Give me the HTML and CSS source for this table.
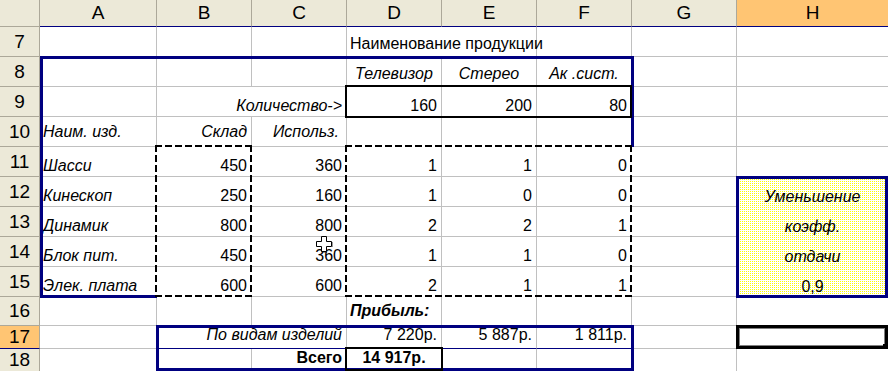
FILE: index.html
```html
<!DOCTYPE html>
<html lang="ru">
<head>
<meta charset="utf-8">
<title>Прибыль по видам изделий</title>
<link rel="stylesheet" href="styles.css">
</head>
<body>
<div class="sheet">
  <div class="line head">
    <div class="hd corner"></div>
    <div class="hd col">A</div>
    <div class="hd col">B</div>
    <div class="hd col">C</div>
    <div class="hd col">D</div>
    <div class="hd col">E</div>
    <div class="hd col">F</div>
    <div class="hd col">G</div>
    <div class="hd col sel last">H</div>
  </div>

  <div class="line r7">
    <div class="hd num">7</div>
    <div class="c"></div>
    <div class="c"></div>
    <div class="c"></div>
    <div class="c span2">Наименование продукции</div>
    <div class="c"></div>
    <div class="c"></div>
    <div class="c last nv-r"></div>
  </div>

  <div class="line r8">
    <div class="hd num">8</div>
    <div class="c"></div>
    <div class="c"></div>
    <div class="c"></div>
    <div class="c i ctr">Телевизор</div>
    <div class="c i ctr">Стерео</div>
    <div class="c i ctr">Ак .сист.</div>
    <div class="c"></div>
    <div class="c last nv-r"></div>
  </div>

  <div class="line r9">
    <div class="hd num">9</div>
    <div class="c"></div>
    <div class="c span2 i r">Количество-&gt;</div>
    <div class="c r">160</div>
    <div class="c r">200</div>
    <div class="c r">80</div>
    <div class="c"></div>
    <div class="c last nv-r"></div>
  </div>

  <div class="line r10">
    <div class="hd num">10</div>
    <div class="c i">Наим. изд.</div>
    <div class="c i r">Склад</div>
    <div class="c i r wide">Использ.</div>
    <div class="c"></div>
    <div class="c"></div>
    <div class="c"></div>
    <div class="c"></div>
    <div class="c last"></div>
  </div>

  <div class="line r11">
    <div class="hd num">11</div>
    <div class="c i">Шасси</div>
    <div class="c r">450</div>
    <div class="c r">360</div>
    <div class="c r">1</div>
    <div class="c r">1</div>
    <div class="c r">0</div>
    <div class="c"></div>
    <div class="c last"></div>
  </div>

  <div class="line r12">
    <div class="hd num">12</div>
    <div class="c i">Кинескоп</div>
    <div class="c r">250</div>
    <div class="c r">160</div>
    <div class="c r">1</div>
    <div class="c r">0</div>
    <div class="c r">0</div>
    <div class="c"></div>
    <div class="c last fill i ctr">Уменьшение</div>
  </div>

  <div class="line r13">
    <div class="hd num">13</div>
    <div class="c i">Динамик</div>
    <div class="c r">800</div>
    <div class="c r">800</div>
    <div class="c r">2</div>
    <div class="c r">2</div>
    <div class="c r">1</div>
    <div class="c"></div>
    <div class="c last fill i ctr">коэфф.</div>
  </div>

  <div class="line r14">
    <div class="hd num">14</div>
    <div class="c i">Блок пит.</div>
    <div class="c r">450</div>
    <div class="c r">360</div>
    <div class="c r">1</div>
    <div class="c r">1</div>
    <div class="c r">0</div>
    <div class="c"></div>
    <div class="c last fill i ctr">отдачи</div>
  </div>

  <div class="line r15">
    <div class="hd num">15</div>
    <div class="c i">Элек. плата</div>
    <div class="c r">600</div>
    <div class="c r">600</div>
    <div class="c r">2</div>
    <div class="c r">1</div>
    <div class="c r">1</div>
    <div class="c"></div>
    <div class="c last fill ctr">0,9</div>
  </div>

  <div class="line r16">
    <div class="hd num">16</div>
    <div class="c"></div>
    <div class="c"></div>
    <div class="c"></div>
    <div class="c b i">Прибыль:</div>
    <div class="c"></div>
    <div class="c"></div>
    <div class="c"></div>
    <div class="c last"></div>
  </div>

  <div class="line r17">
    <div class="hd num sel">17</div>
    <div class="c"></div>
    <div class="c span2 i r nb">По видам изделий</div>
    <div class="c r nb">7 220р.</div>
    <div class="c r nb">5 887р.</div>
    <div class="c r nb">1 811р.</div>
    <div class="c"></div>
    <div class="c last"></div>
  </div>

  <div class="line r18">
    <div class="hd num">18</div>
    <div class="c"></div>
    <div class="c"></div>
    <div class="c b r">Всего</div>
    <div class="c b ctr">14 917р.</div>
    <div class="c"></div>
    <div class="c"></div>
    <div class="c"></div>
    <div class="c last"></div>
  </div>

  <!-- range borders drawn over the cells -->
  <div class="frame nv-a"></div>
  <div class="frame nv-top"></div>
  <div class="frame nv-f"></div>
  <div class="frame box-qty"></div>
  <div class="frame dash dash-b"></div>
  <div class="frame dash dash-df"></div>
  <div class="frame nv-coef"></div>
  <div class="frame nv-sum"></div>
  <div class="frame box-total"></div>
  <div class="frame active"><span class="handle"></span></div>

  <svg class="cursor" width="17" height="17" viewBox="0 0 17 17">
    <path d="M5.5 0.5h5v5h5v5h-5v5h-5v-5h-5v-5h5z" fill="#fff" stroke="#000"/>
    <path d="M6 16.5h5M16.5 6v5" stroke="#000" stroke-opacity="0.4"/>
  </svg>
</div>
</body>
</html>
```

FILE: styles.css
```css
* {
  box-sizing: border-box;
}

html,
body {
  margin: 0;
  padding: 0;
  background: #fff;
}

body {
  overflow: hidden;
  font-family: "Liberation Sans", Arial, sans-serif;
  font-size: 16px;
  color: #000;
}

.sheet {
  position: relative;
  display: grid;
  grid-template-columns: 40px 117px 95px 95px 95px 95px 95px 105px 1fr;
  grid-template-rows: 27px repeat(9, 30px) 29px 23px 23px;
  width: 888px;
  height: 371px;
  overflow: hidden;
}

.line {
  display: contents;
}

/* headers */
.hd {
  display: flex;
  align-items: center;
  justify-content: center;
  background: #ece9d8;
  border-right: 1px solid #aca899;
  border-bottom: 1px solid #aca899;
  font-size: 19px;
}

.hd.col {
  border-bottom-color: #000080;
}

.hd.sel {
  background: #ffc573;
}

.hd.num.sel {
  border-bottom-color: #000080;
}

.hd.last {
  border-right: none;
}

/* cells */
.c {
  display: flex;
  align-items: flex-end;
  justify-content: flex-start;
  padding: 0 3px 1px 3px;
  line-height: 18px;
  white-space: nowrap;
  border-right: 1px solid #c0c0c0;
  border-bottom: 1px solid #c0c0c0;
}

.c.last {
  border-right: none;
}

.span2 {
  grid-column: span 2;
}

.i {
  font-style: italic;
}

.b {
  font-weight: bold;
}

.r {
  justify-content: flex-end;
  padding-right: 4px;
}

.ctr {
  justify-content: center;
}

.wide {
  padding-right: 7px;
}

.nb {
  border-bottom-color: #000080;
}

.nv-r {
  border-right: 2px solid #000080;
}

/* sparse yellow dot pattern fill */
.fill {
  border-bottom: none;
  background: conic-gradient(#ffff00 0 25%, #fff 0) 0 0 / 2px 2px;
}

/* vertical placement of text per row */
.r7 > .c { padding-bottom: 3px; }
.r8 > .c { padding-bottom: 3px; }
.r9 > .c { padding-bottom: 1px; }
.r10 > .c { padding-bottom: 5px; }
.r16 > .c { padding-bottom: 5px; }
.r17 > .c { padding-bottom: 4px; }
.r18 > .c { padding-bottom: 4px; }

/* range borders */
.frame {
  position: absolute;
  pointer-events: none;
}

.nv-a {
  grid-column: 2 / 3;
  grid-row: 3 / 11;
  inset: -1px 0 -1px 0;
  border-top: 3px solid #000080;
  border-left: 3px solid #000080;
  border-bottom: 3px solid #000080;
}

.nv-top {
  grid-column: 3 / 8;
  grid-row: 3 / 4;
  top: -1px;
  left: 0;
  right: -2px;
  height: 3px;
  background: #000080;
}

.nv-f {
  grid-column: 7 / 8;
  grid-row: 3 / 6;
  inset: -1px -2px 0 auto;
  width: 3px;
  background: #000080;
}

.box-qty {
  grid-column: 5 / 8;
  grid-row: 4 / 5;
  inset: -2px 0 -1px -2px;
  border: 2px solid #000;
}

.dash {
  --h: repeating-linear-gradient(90deg, #000 0 7px, #fff 7px 10px);
  --v: repeating-linear-gradient(180deg, #000 0 7px, #fff 7px 10px);
  background:
    var(--v) left top / 2px 100% no-repeat,
    var(--v) right top / 2px 100% no-repeat,
    var(--h) left top / 100% 2px no-repeat,
    var(--h) left bottom / 100% 2px no-repeat;
}

.dash-b {
  grid-column: 3 / 4;
  grid-row: 6 / 11;
  inset: -2px 0 0 -2px;
}

.dash-df {
  grid-column: 5 / 8;
  grid-row: 6 / 11;
  inset: -2px 0 0 -2px;
}

.nv-coef {
  grid-column: 9 / 10;
  grid-row: 7 / 11;
  inset: -1px 0 -1px -1px;
  border: 3px solid #000080;
}

.nv-sum {
  grid-column: 3 / 8;
  grid-row: 12 / 14;
  inset: -1px -2px 1px -1px;
  border: 3px solid #000080;
}

.box-total {
  grid-column: 5 / 6;
  grid-row: 13 / 14;
  inset: -2px -1px 1px -2px;
  border: 2px solid #000;
}

.active {
  grid-column: 9 / 10;
  grid-row: 12 / 13;
  inset: -1px 0 0 -1px;
  border: 3px solid #000;
  box-shadow: inset 0 0 0 1px #808080;
}

.handle {
  position: absolute;
  right: -3px;
  bottom: -3px;
  width: 5px;
  height: 5px;
  background: #000;
}

.cursor {
  position: absolute;
  grid-column: 4 / 5;
  grid-row: 9 / 10;
  top: -1px;
  left: 64px;
  z-index: 2;
}
```
